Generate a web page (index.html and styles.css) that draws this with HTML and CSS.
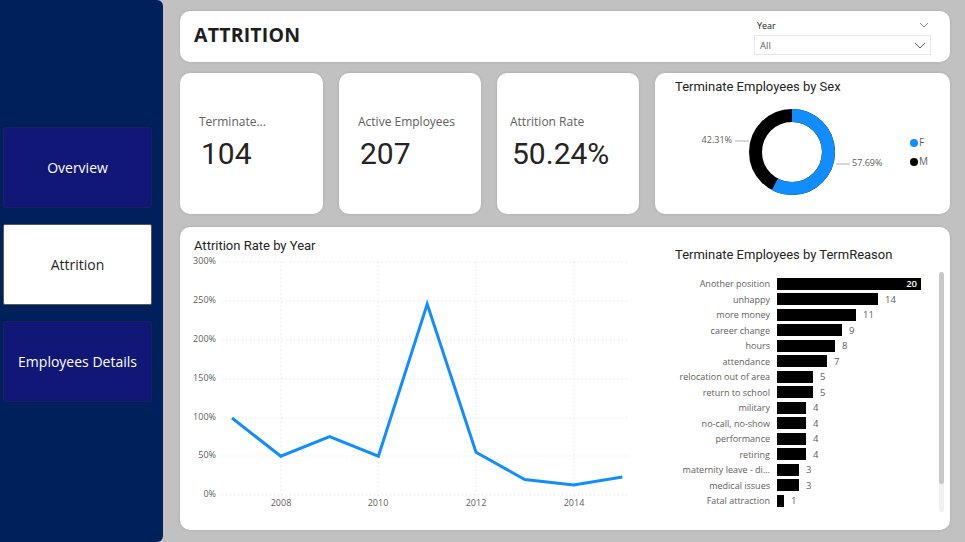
FILE: index.html
```html
<!DOCTYPE html>
<html>
<head>
<meta charset="utf-8">
<link rel="stylesheet" href="styles.css">
</head>
<body>
<div class="app">
  <nav class="sidebar">
    <div class="nav-btn">Overview</div>
    <div class="nav-btn active">Attrition</div>
    <div class="nav-btn">Employees Details</div>
  </nav>
  <main class="main">
    <header class="card header">
      <h1 class="page-title">ATTRITION</h1>
      <div class="slicer">
        <div class="slicer-head">
          <span>Year</span>
          <svg class="chev" width="10" height="6" viewBox="0 0 10 6"><path d="M1 1 L5 5 L9 1" fill="none" stroke="#8a8886" stroke-width="1"/></svg>
        </div>
        <div class="slicer-box">
          <span>All</span>
          <svg class="chev" width="12" height="7" viewBox="0 0 12 7"><path d="M1 1 L6 6 L11 1" fill="none" stroke="#605e5c" stroke-width="1"/></svg>
        </div>
      </div>
    </header>

    <section class="kpi-row">
      <div class="card kpi kpi-1">
        <div class="kpi-label">Terminate...</div>
        <div class="kpi-value">104</div>
      </div>
      <div class="card kpi">
        <div class="kpi-label">Active Employees</div>
        <div class="kpi-value">207</div>
      </div>
      <div class="card kpi kpi-3">
        <div class="kpi-label">Attrition Rate</div>
        <div class="kpi-value">50.24%</div>
      </div>
      <div class="card donut-card">
        <div class="visual-title">Terminate Employees by Sex</div>
        <svg class="donut" width="295" height="115" viewBox="0 0 295 115">
          <circle cx="137" cy="57" r="36.5" fill="none" stroke="#000" stroke-width="13"/>
          <circle cx="137" cy="57" r="36.5" fill="none" stroke="#118DFF" stroke-width="13"
            stroke-dasharray="132.3 300" transform="rotate(-90 137 57)"/>
          <line x1="80" y1="46" x2="94" y2="46" stroke="#b3b0ad" stroke-width="1"/>
          <line x1="181" y1="69" x2="195" y2="69" stroke="#b3b0ad" stroke-width="1"/>
          <text class="dl" x="77" y="46" text-anchor="end">42.31%</text>
          <text class="dl" x="197" y="69">57.69%</text>
          <circle cx="259" cy="48" r="4" fill="#118DFF"/>
          <text class="lg" x="264" y="48">F</text>
          <circle cx="259" cy="67" r="4" fill="#000"/>
          <text class="lg" x="264" y="67">M</text>
        </svg>
      </div>
    </section>

    <section class="card bottom">
      <div class="line-visual">
        <div class="visual-title">Attrition Rate by Year</div>
        <svg class="linechart" width="470" height="262" viewBox="0 0 470 262">
          <g class="grid">
            <line x1="42" y1="9" x2="450" y2="9"/>
            <line x1="42" y1="48" x2="450" y2="48"/>
            <line x1="42" y1="87" x2="450" y2="87"/>
            <line x1="42" y1="126" x2="450" y2="126"/>
            <line x1="42" y1="165" x2="450" y2="165"/>
            <line x1="42" y1="203" x2="450" y2="203"/>
            <line x1="42" y1="242" x2="450" y2="242"/>
            <line x1="101" y1="9" x2="101" y2="242"/>
            <line x1="198" y1="9" x2="198" y2="242"/>
            <line x1="296" y1="9" x2="296" y2="242"/>
            <line x1="394" y1="9" x2="394" y2="242"/>
          </g>
          <g class="axis-y">
            <text x="36" y="9">300%</text>
            <text x="36" y="48">250%</text>
            <text x="36" y="87">200%</text>
            <text x="36" y="126">150%</text>
            <text x="36" y="165">100%</text>
            <text x="36" y="203">50%</text>
            <text x="36" y="242">0%</text>
          </g>
          <g class="axis-x">
            <text x="101" y="251">2008</text>
            <text x="198" y="251">2010</text>
            <text x="296" y="251">2012</text>
            <text x="394" y="251">2014</text>
          </g>
          <polyline fill="none" stroke="#118DFF" stroke-width="3" stroke-linejoin="miter"
            points="52,165 100.8,203.2 149.6,183.7 198.4,203.2 247.2,51 296,199.3 344.8,226.5 393.6,231.9 442.4,224.1"/>
        </svg>
      </div>

      <div class="bar-visual">
        <div class="visual-title">Terminate Employees by TermReason</div>
        <div class="bar-body">
          <div class="bar-list">
            <div class="bar-row"><span class="bar-label">Another position</span><span class="bar inner" style="width:144px"><span class="bar-val-in">20</span></span></div>
            <div class="bar-row"><span class="bar-label">unhappy</span><span class="bar" style="width:101px"></span><span class="bar-val">14</span></div>
            <div class="bar-row"><span class="bar-label">more money</span><span class="bar" style="width:79px"></span><span class="bar-val">11</span></div>
            <div class="bar-row"><span class="bar-label">career change</span><span class="bar" style="width:65px"></span><span class="bar-val">9</span></div>
            <div class="bar-row"><span class="bar-label">hours</span><span class="bar" style="width:58px"></span><span class="bar-val">8</span></div>
            <div class="bar-row"><span class="bar-label">attendance</span><span class="bar" style="width:50px"></span><span class="bar-val">7</span></div>
            <div class="bar-row"><span class="bar-label">relocation out of area</span><span class="bar" style="width:36px"></span><span class="bar-val">5</span></div>
            <div class="bar-row"><span class="bar-label">return to school</span><span class="bar" style="width:36px"></span><span class="bar-val">5</span></div>
            <div class="bar-row"><span class="bar-label">military</span><span class="bar" style="width:29px"></span><span class="bar-val">4</span></div>
            <div class="bar-row"><span class="bar-label">no-call, no-show</span><span class="bar" style="width:29px"></span><span class="bar-val">4</span></div>
            <div class="bar-row"><span class="bar-label">performance</span><span class="bar" style="width:29px"></span><span class="bar-val">4</span></div>
            <div class="bar-row"><span class="bar-label">retiring</span><span class="bar" style="width:29px"></span><span class="bar-val">4</span></div>
            <div class="bar-row"><span class="bar-label">maternity leave - di...</span><span class="bar" style="width:22px"></span><span class="bar-val">3</span></div>
            <div class="bar-row"><span class="bar-label">medical issues</span><span class="bar" style="width:22px"></span><span class="bar-val">3</span></div>
            <div class="bar-row"><span class="bar-label">Fatal attraction</span><span class="bar" style="width:7px"></span><span class="bar-val">1</span></div>
          </div>
          <div class="scrollbar"><div class="thumb"></div></div>
        </div>
      </div>
    </section>
  </main>
</div>
</body>
</html>
```

FILE: styles.css
```css
* { box-sizing: border-box; }
html, body { margin: 0; padding: 0; }
body {
  width: 965px;
  height: 542px;
  background: #c1c1c1;
  font-family: "Open Sans", "Segoe UI", sans-serif;
  overflow: hidden;
}
.app {
  display: flex;
  height: 542px;
}
.sidebar {
  width: 163px;
  height: 542px;
  background: #00205b;
  border-radius: 0 6px 6px 0;
  display: flex;
  flex-direction: column;
  gap: 16px;
  padding: 127px 0 0 3px;
  flex-shrink: 0;
}
.nav-btn {
  width: 149px;
  height: 81px;
  background: #111776;
  border: 1px solid #1a1f5e;
  border-radius: 2px;
  color: #fff;
  font-size: 14px;
  display: flex;
  align-items: center;
  justify-content: center;
}
.nav-btn.active {
  background: #fff;
  color: #252423;
  border-color: #5a5a5a;
}
.main {
  flex: 1;
  padding: 11px 15px 0 17px;
  display: flex;
  flex-direction: column;
}
.card {
  background: #fff;
  border-radius: 10px;
  box-shadow: 0 0 3px rgba(0,0,0,0.12);
}
.header {
  height: 51px;
  display: flex;
  align-items: flex-start;
  justify-content: space-between;
  padding: 0 19px 0 14px;
}
.page-title {
  margin: 0;
  font-family: "Open Sans", sans-serif;
  font-weight: 700;
  font-size: 19.5px;
  line-height: 24px;
  margin-top: 12px;
  color: #1e1e1e;
  letter-spacing: 0.2px;
}
.slicer {
  width: 177px;
  margin-top: 7px;
}
.slicer-head {
  display: flex;
  justify-content: space-between;
  align-items: center;
  height: 14px;
  padding: 0 2px 0 3px;
  font-size: 9px;
  color: #252423;
}
.slicer-box {
  margin-top: 3px;
  height: 20px;
  border: 1px solid #e8e8e8;
  display: flex;
  align-items: center;
  justify-content: space-between;
  padding: 0 4px 0 5px;
  font-size: 9.5px;
  color: #605e5c;
}
.kpi-row {
  margin-top: 11px;
  height: 141px;
  display: flex;
  gap: 16px;
}
.kpi {
  width: 142px;
  padding: 41px 0 0 19px;
  display: flex;
  flex-direction: column;
  gap: 6px;
}
.kpi-1 { width: 143px; }
.kpi-3 { padding-left: 13px; }
.kpi-label {
  font-size: 12px;
  line-height: 16px;
  color: #605e5c;
}
.kpi-value {
  font-family: Roboto, sans-serif;
  font-size: 30px;
  line-height: 36px;
  color: #252423;
  padding-left: 2px;
}
.donut-card {
  flex: 1;
  padding-top: 6px;
}
.visual-title {
  font-family: Roboto, sans-serif;
  font-weight: 400;
  font-size: 13px;
  line-height: 16px;
  color: #252423;
  letter-spacing: 0;
}
.donut-card .visual-title { padding-left: 20px; }
.donut { display: block; margin-top: 0; }
.dl { font-size: 9px; fill: #605e5c; dominant-baseline: middle; font-family: "Open Sans", sans-serif; }
.lg { font-size: 10px; fill: #605e5c; dominant-baseline: middle; font-family: "Open Sans", sans-serif; }
.bottom {
  margin-top: 13px;
  height: 303px;
  display: flex;
}
.line-visual {
  width: 470px;
  padding-top: 11px;
}
.line-visual .visual-title { padding-left: 14px; }
.linechart { display: block; margin-top: -1px; }
.grid line { stroke: #dcdcdc; stroke-width: 1; stroke-dasharray: 1 3; }
.axis-y text { font-size: 9px; fill: #605e5c; text-anchor: end; dominant-baseline: middle; font-family: "Open Sans", sans-serif; }
.axis-x text { font-size: 9px; fill: #605e5c; text-anchor: middle; dominant-baseline: middle; font-family: "Open Sans", sans-serif; }
.bar-visual {
  flex: 1;
  padding: 20px 0 0 25px;
}
.bar-body {
  margin-top: 9px;
  display: flex;
}
.bar-list {
  width: 264px;
  padding-top: 4px;
}
.bar-row {
  height: 15.5px;
  display: flex;
  align-items: center;
}
.bar-label {
  width: 95px;
  text-align: right;
  font-size: 9px;
  color: #605e5c;
  white-space: nowrap;
  margin-right: 7px;
}
.bar {
  height: 12px;
  background: #000;
  display: flex;
  align-items: center;
  justify-content: flex-end;
}
.bar-val {
  font-size: 9.5px;
  color: #605e5c;
  margin-left: 7px;
}
.bar-val-in {
  font-size: 9.5px;
  color: #fff;
  padding-right: 4px;
  font-weight: 600;
}
.scrollbar {
  width: 5px;
  height: 240px;
  background: #f0f0f0;
  border-radius: 3px;
}
.thumb {
  height: 212px;
  background: #c8c8c8;
  border-radius: 3px;
}
```
